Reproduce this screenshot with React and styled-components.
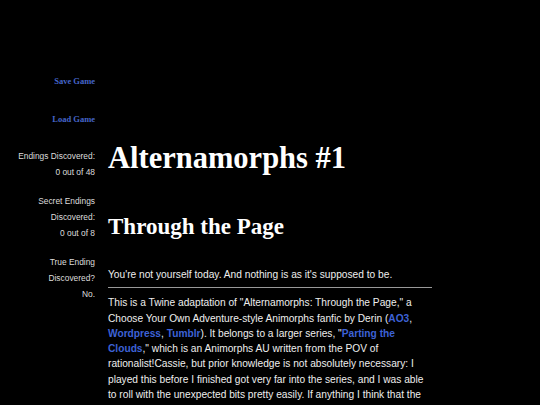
import React from 'react';
import styled, { createGlobalStyle } from 'styled-components';

const GlobalStyle = createGlobalStyle`
    html, body {
        margin: 0;
        padding: 0;
        background: #000;
        color: #eee;
        overflow: hidden;
    }
`;

const Page = styled.div`
    display: flex;
    align-items: flex-start;
    gap: 13px;
    width: 540px;
    height: 405px;
    overflow: hidden;
`;

const Sidebar = styled.div`
    width: 95px;
    flex-shrink: 0;
    padding-top: 73px;
    display: flex;
    flex-direction: column;
    align-items: flex-end;
    text-align: right;
    font-family: "Liberation Sans", Arial, sans-serif;
    font-size: 8.4px;
    line-height: 16px;
    color: #ddd;
`;

const MenuLink = styled.a`
    font-family: "Liberation Serif", "Times New Roman", serif;
    font-weight: bold;
    font-size: 8.5px;
    line-height: 16px;
    color: #4565c8;
    text-decoration: none;
    cursor: pointer;
    margin-bottom: ${p => p.$gap}px;
`;

const Stat = styled.div`
    margin-bottom: 13px;
`;

const Main = styled.div`
    width: 324px;
    padding-top: 138px;
    font-family: "Liberation Sans", Arial, sans-serif;
    font-size: 10.2px;
    line-height: 15.3px;
    color: #eee;
`;

const Title = styled.h1`
    font-family: "Liberation Serif", "Times New Roman", serif;
    font-weight: bold;
    font-size: 30.5px;
    line-height: 40px;
    margin: 0 0 34px;
    color: #fff;
`;

const Subtitle = styled.h2`
    font-family: "Liberation Serif", "Times New Roman", serif;
    font-weight: bold;
    font-size: 23px;
    line-height: 30px;
    margin: 0 0 25px;
    color: #fff;
`;

const Para = styled.p`
    margin: 0;
`;

const Rule = styled.hr`
    border: none;
    border-top: 1px solid #999;
    margin: 5px 0 7px;
`;

const Link = styled.a`
    color: #3d62d6;
    font-weight: bold;
    text-decoration: none;
    cursor: pointer;
`;

export default function App() {
    return (
        <>
            <GlobalStyle />
            <Page>
                <Sidebar>
                    <MenuLink $gap={22}>Save Game</MenuLink>
                    <MenuLink $gap={21}>Load Game</MenuLink>
                    <Stat>Endings Discovered:<br />0 out of 48</Stat>
                    <Stat>Secret Endings<br />Discovered:<br />0 out of 8</Stat>
                    <Stat>True Ending<br />Discovered?<br />No.</Stat>
                </Sidebar>
                <Main>
                    <Title>Alternamorphs #1</Title>
                    <Subtitle>Through the Page</Subtitle>
                    <Para>You're not yourself today. And nothing is as it's supposed to be.</Para>
                    <Rule />
                    <Para>
                        This is a Twine adaptation of "Alternamorphs: Through the Page," a Choose Your Own
                        Adventure-style Animorphs fanfic by Derin (<Link>AO3</Link>, <Link>Wordpress</Link>,{' '}
                        <Link>Tumblr</Link>). It belongs to a larger series, "<Link>Parting the Clouds</Link>,"
                        which is an Animorphs AU written from the POV of rationalist!Cassie, but prior knowledge
                        is not absolutely necessary: I played this before I finished got very far into the series,
                        and I was able to roll with the unexpected bits pretty easily. If anything I think that the
                        series is better for it.
                    </Para>
                </Main>
            </Page>
        </>
    );
}
